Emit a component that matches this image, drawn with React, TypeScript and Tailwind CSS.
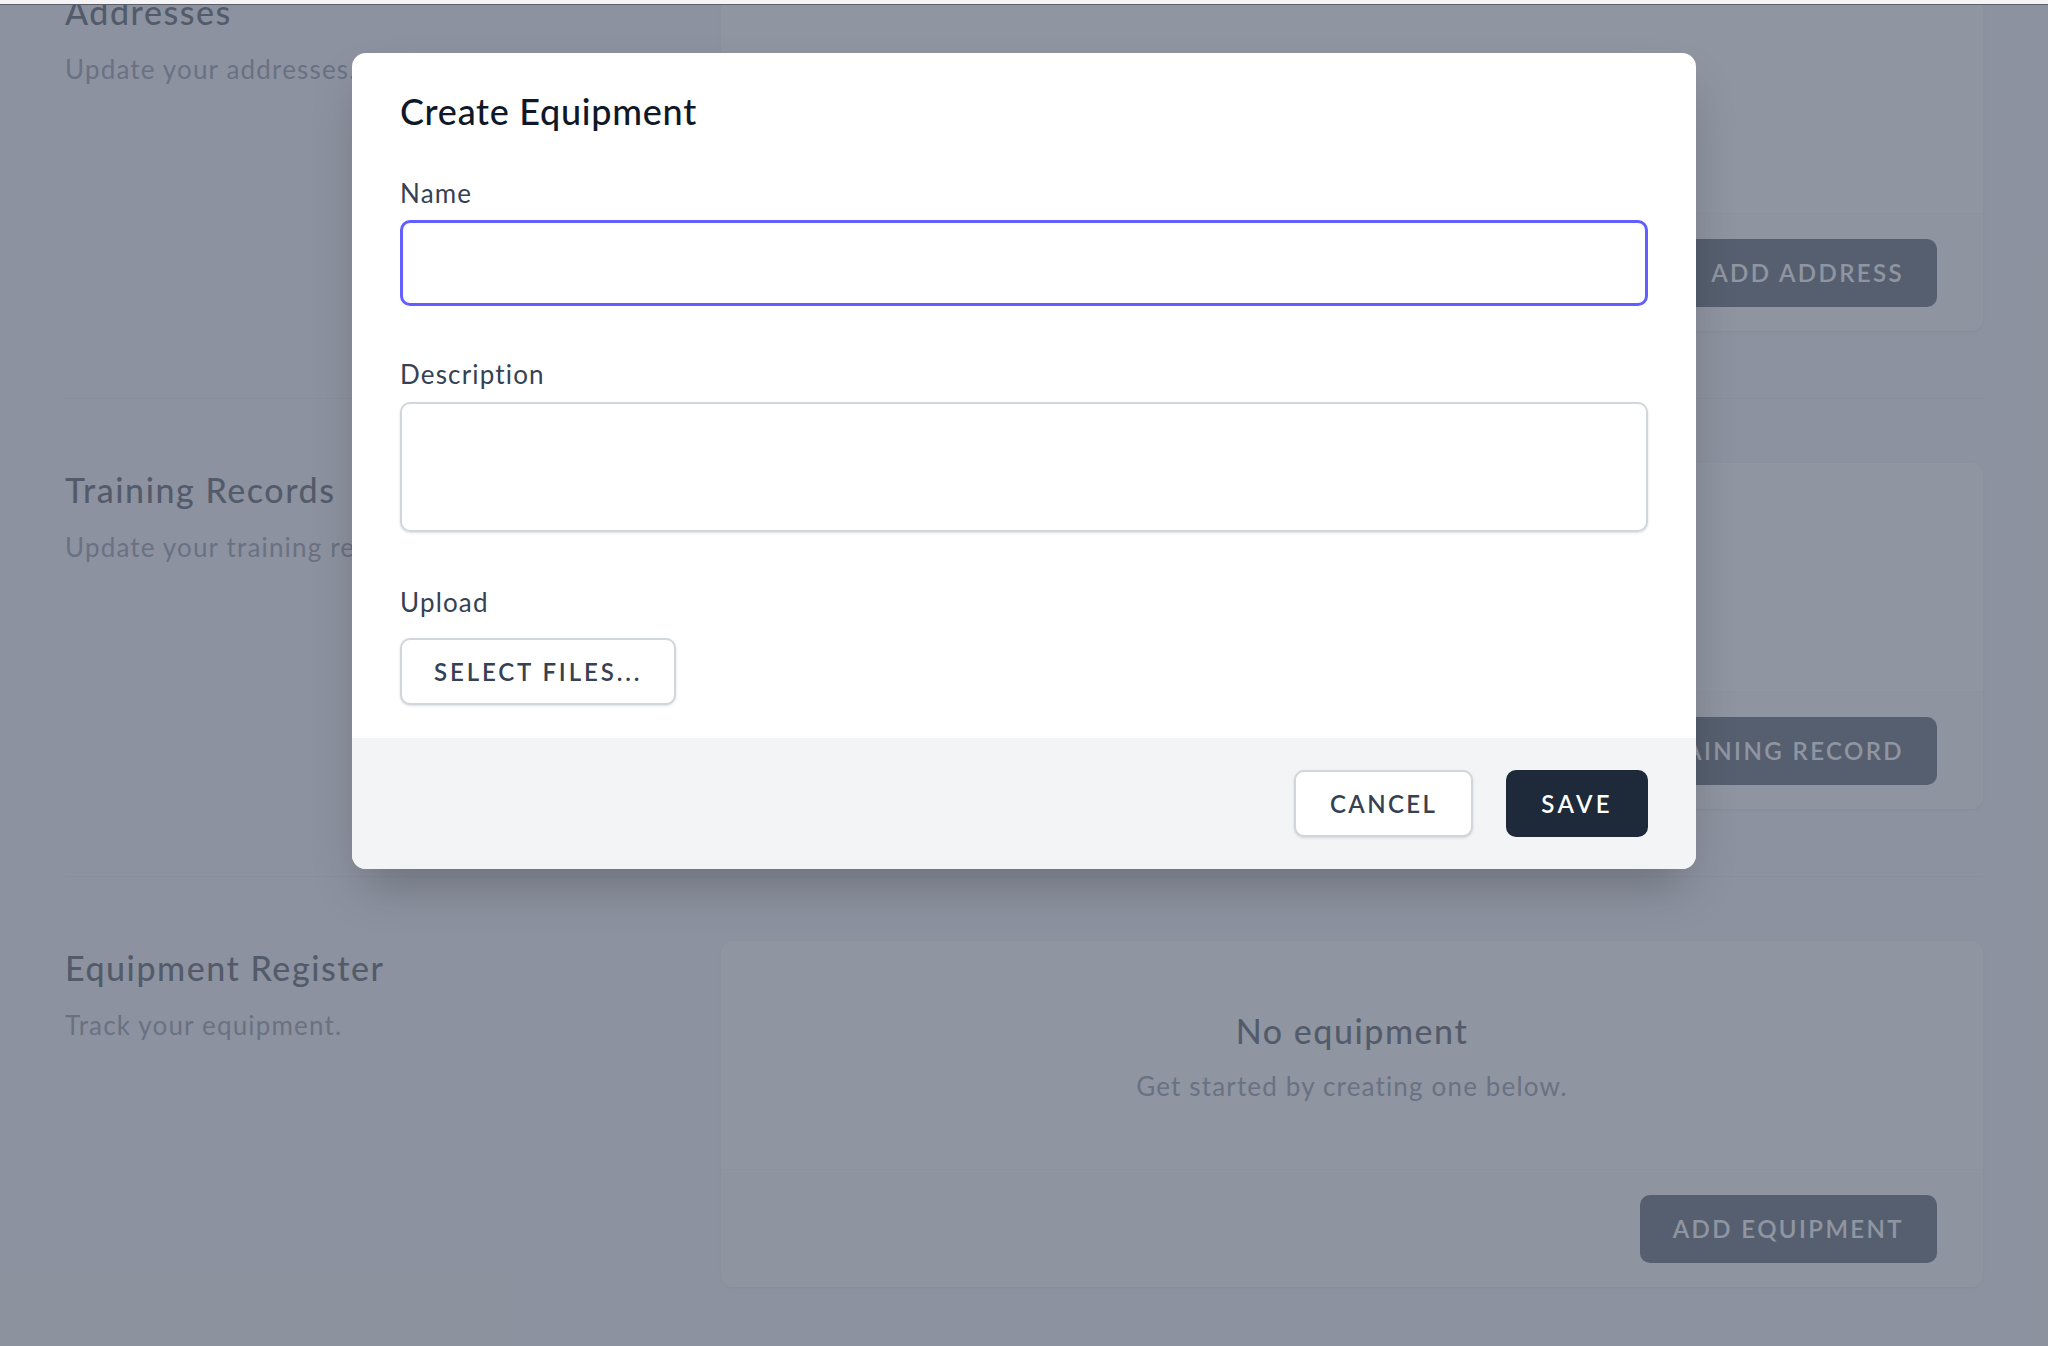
import React from 'react'

type Section = {
  title: string
  subtitle: string
  action: string
  empty?: { title: string; text: string }
}

const sections: Section[] = [
  { title: 'Addresses', subtitle: 'Update your addresses.', action: 'Add Address' },
  { title: 'Training Records', subtitle: 'Update your training records.', action: 'Add Training Record' },
  {
    title: 'Equipment Register',
    subtitle: 'Track your equipment.',
    action: 'Add Equipment',
    empty: { title: 'No equipment', text: 'Get started by creating one below.' },
  },
]

function SectionRow({ s }: { s: Section }) {
  return (
    <div className="flex">
      <div className="w-[656px] pt-[7px]">
        <h3 className="text-[34px] leading-[40px] font-medium tracking-[0.045em] text-gray-900">{s.title}</h3>
        <p className="mt-[19px] text-[26px] leading-[36px] tracking-[0.045em] text-gray-500">{s.subtitle}</p>
      </div>
      <div className="flex-1 rounded-[12px] bg-white shadow overflow-hidden">
        <div className="h-[228px] text-center">
          {s.empty && (
            <div className="pt-[70px]">
              <h4 className="text-[34px] leading-[40px] font-medium tracking-[0.045em] text-gray-900">{s.empty.title}</h4>
              <p className="mt-[17px] text-[26px] leading-[36px] tracking-[0.045em] text-gray-500">{s.empty.text}</p>
            </div>
          )}
        </div>
        <div className="h-[118px] bg-gray-50 border-t border-gray-100 flex items-center justify-end px-[46px]">
          <button className="h-[68px] px-[33px] rounded-[10px] bg-gray-800 text-white text-[24px] font-semibold uppercase tracking-[0.1em]">
            {s.action}
          </button>
        </div>
      </div>
    </div>
  )
}

export default function App() {
  return (
    <div className="h-screen flex flex-col bg-gray-100 font-['Lato',sans-serif] overflow-hidden">
      <div className="h-[5px] bg-[#f4f4f5] border-b border-[#5c606b] shrink-0" />
      <div className="relative flex-1 overflow-hidden">
        <div className="px-[65px] mt-[-20px]">
          {sections.map((s, i) => (
            <div key={s.title}>
              {i > 0 && <div className="mt-[67px] mb-[64px] border-t border-gray-200" />}
              <SectionRow s={s} />
            </div>
          ))}
        </div>

        {/* modal overlay */}
        <div className="absolute inset-0 bg-gray-500/75" />
        <div className="absolute inset-0 flex justify-center items-start pt-[48px]">
          <div className="w-[1344px] rounded-[14px] bg-white overflow-hidden shadow-2xl">
            <div className="px-12 pt-[36px] pb-[33px]">
              <h2 className="text-[36px] leading-[44px] font-medium tracking-[0.02em] text-gray-900">Create Equipment</h2>

              <label className="block mt-[42px] text-[26px] leading-[36px] tracking-[0.045em] text-gray-700">Name</label>
              <input
                type="text"
                className="mt-[9px] block w-full h-[86px] rounded-[10px] border-[3px] border-indigo-500 outline-none px-4 text-[26px]"
              />

              <label className="block mt-[50px] text-[26px] leading-[36px] tracking-[0.045em] text-gray-700">Description</label>
              <textarea className="mt-[10px] block w-full h-[130px] rounded-[10px] border-2 border-gray-300 outline-none resize-none px-4 py-3 text-[26px] shadow-sm" />

              <label className="block mt-[52px] text-[26px] leading-[36px] tracking-[0.045em] text-gray-700">Upload</label>
              <button className="mt-[18px] h-[67px] px-[32px] rounded-[10px] border-2 border-gray-300 bg-white text-[24px] font-semibold uppercase tracking-[0.12em] text-gray-700 shadow-sm">
                Select files...
              </button>
            </div>
            <div className="bg-gray-100 px-12 pt-[32px] pb-[32px] flex justify-end gap-[33px]">
              <button className="h-[67px] px-[34px] rounded-[10px] border-2 border-gray-300 bg-white text-[24px] font-semibold uppercase tracking-[0.1em] text-gray-700 shadow-sm">
                Cancel
              </button>
              <button className="h-[67px] px-[35px] rounded-[10px] bg-gray-800 text-[24px] font-semibold uppercase tracking-[0.14em] text-white">
                Save
              </button>
            </div>
          </div>
        </div>
      </div>
    </div>
  )
}
